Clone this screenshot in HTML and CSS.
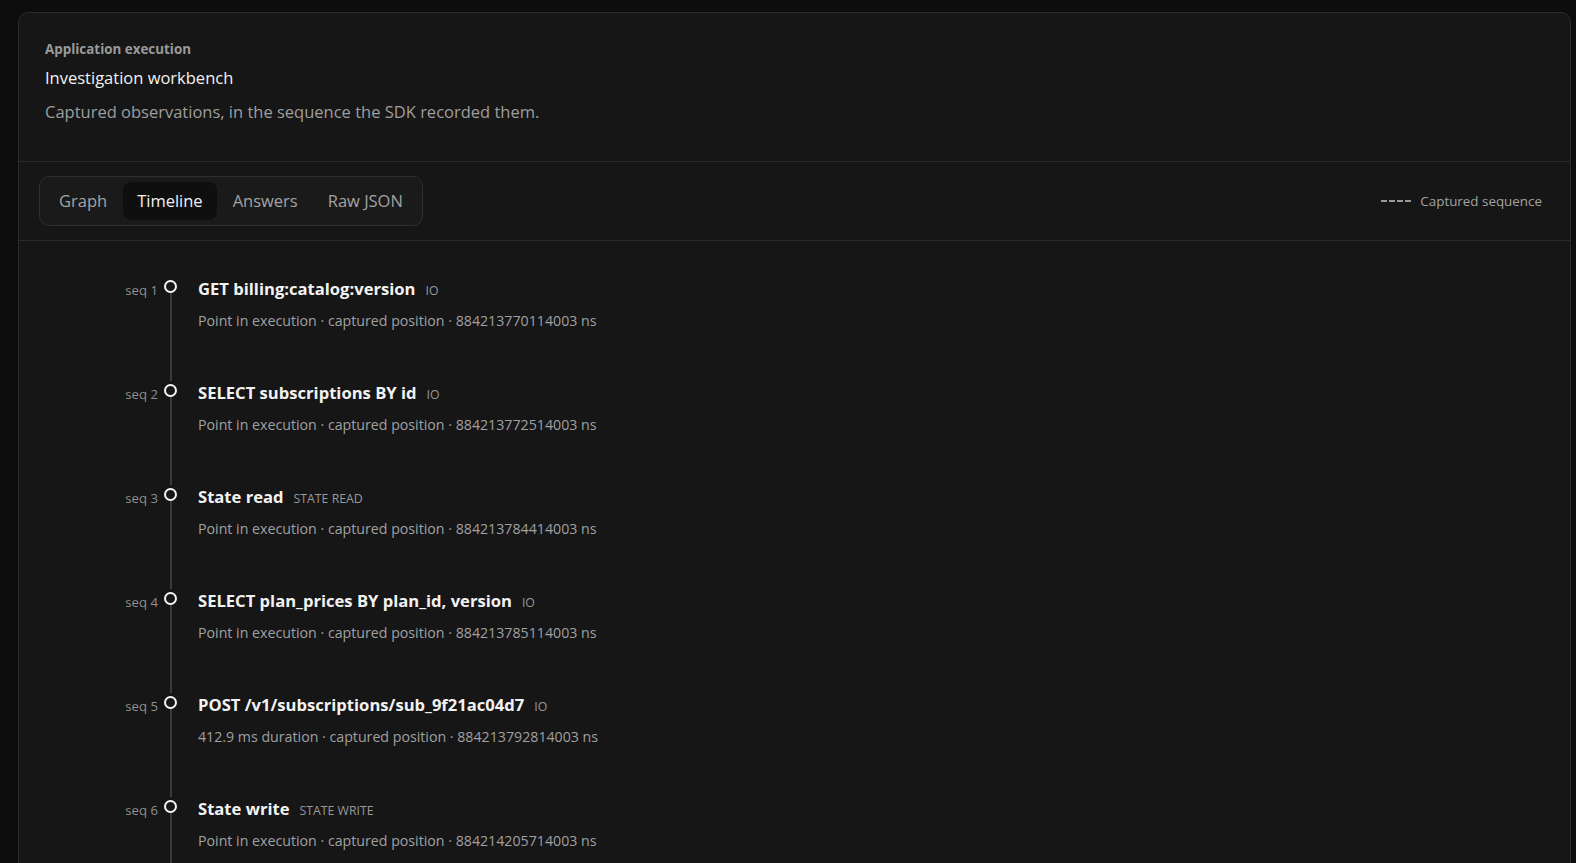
FILE: index.html
```html
<!DOCTYPE html>
<html lang="en">
<head>
<meta charset="utf-8">
<title>Investigation workbench</title>
<link rel="stylesheet" href="styles.css">
</head>
<body>
<main class="card">
  <header class="card-head">
    <div class="eyebrow">Application execution</div>
    <h1 class="title">Investigation workbench</h1>
    <p class="desc">Captured observations, in the sequence the SDK recorded them.</p>
  </header>

  <div class="toolbar">
    <nav class="tabs">
      <button class="tab">Graph</button>
      <button class="tab active">Timeline</button>
      <button class="tab">Answers</button>
      <button class="tab">Raw JSON</button>
    </nav>
    <div class="legend">
      <span class="dash"></span>
      <span class="legend-label">Captured sequence</span>
    </div>
  </div>

  <ol class="timeline">
    <li class="event">
      <span class="seq">seq 1</span>
      <span class="rail"><span class="dot"></span><span class="line"></span></span>
      <div class="body">
        <div class="ev-title"><span class="name">GET billing:catalog:version</span><span class="kind">IO</span></div>
        <div class="ev-meta">Point in execution · captured position · 884213770114003 ns</div>
      </div>
    </li>
    <li class="event">
      <span class="seq">seq 2</span>
      <span class="rail"><span class="dot"></span><span class="line"></span></span>
      <div class="body">
        <div class="ev-title"><span class="name">SELECT subscriptions BY id</span><span class="kind">IO</span></div>
        <div class="ev-meta">Point in execution · captured position · 884213772514003 ns</div>
      </div>
    </li>
    <li class="event">
      <span class="seq">seq 3</span>
      <span class="rail"><span class="dot"></span><span class="line"></span></span>
      <div class="body">
        <div class="ev-title"><span class="name">State read</span><span class="kind">State read</span></div>
        <div class="ev-meta">Point in execution · captured position · 884213784414003 ns</div>
      </div>
    </li>
    <li class="event">
      <span class="seq">seq 4</span>
      <span class="rail"><span class="dot"></span><span class="line"></span></span>
      <div class="body">
        <div class="ev-title"><span class="name">SELECT plan_prices BY plan_id, version</span><span class="kind">IO</span></div>
        <div class="ev-meta">Point in execution · captured position · 884213785114003 ns</div>
      </div>
    </li>
    <li class="event">
      <span class="seq">seq 5</span>
      <span class="rail"><span class="dot"></span><span class="line"></span></span>
      <div class="body">
        <div class="ev-title"><span class="name">POST /v1/subscriptions/sub_9f21ac04d7</span><span class="kind">IO</span></div>
        <div class="ev-meta">412.9 ms duration · captured position · 884213792814003 ns</div>
      </div>
    </li>
    <li class="event">
      <span class="seq">seq 6</span>
      <span class="rail"><span class="dot"></span><span class="line"></span></span>
      <div class="body">
        <div class="ev-title"><span class="name">State write</span><span class="kind">State write</span></div>
        <div class="ev-meta">Point in execution · captured position · 884214205714003 ns</div>
      </div>
    </li>
  </ol>
</main>
</body>
</html>
```

FILE: styles.css
```css
* { box-sizing: border-box; }

html, body {
  margin: 0;
  height: 100%;
  overflow: hidden;
}

body {
  background: #0d0d0d;
  font-family: "Segoe UI", "Open Sans", "Liberation Sans", sans-serif;
  color: #e8e8e8;
  padding: 12px 5px 0 18px;
}

.card {
  display: block;
  background: #161616;
  border: 1px solid #2b2b2b;
  border-radius: 10px;
  min-height: 900px;
}

.card-head {
  padding: 27px 26px 37px;
  border-bottom: 1px solid #2b2b2b;
}

.eyebrow {
  font-size: 13.4px;
  font-weight: 700;
  line-height: 18px;
  color: #9a9a9a;
}

.title {
  margin: 8px 0 0;
  font-size: 16.5px;
  font-weight: 400;
  line-height: 24px;
  color: #f2f2f2;
}

.desc {
  margin: 10px 0 0;
  font-size: 16.5px;
  line-height: 24px;
  color: #9e9e9e;
}

.toolbar {
  display: flex;
  align-items: center;
  justify-content: space-between;
  padding: 14px 28px 14px 20px;
  border-bottom: 1px solid #2b2b2b;
}

.tabs {
  display: flex;
  gap: 2px;
  padding: 5px;
  background: #1a1a1a;
  border: 1px solid #2f2f2f;
  border-radius: 10px;
}

.tab {
  font-family: inherit;
  font-size: 16.5px;
  line-height: 38px;
  height: 38px;
  padding: 0 14px;
  border: 0;
  border-radius: 8px;
  background: transparent;
  color: #a3a3a3;
}

.tab.active {
  background: #0f0f0f;
  color: #f2f2f2;
}

.legend {
  display: flex;
  align-items: center;
  gap: 9px;
}

.dash {
  width: 30px;
  height: 2px;
  background: repeating-linear-gradient(90deg, #9a9a9a 0 6px, transparent 6px 8px);
}

.legend-label {
  font-size: 13.4px;
  color: #a3a3a3;
}

.timeline {
  list-style: none;
  margin: 0;
  padding: 36px 0 0 78px;
}

.event {
  display: flex;
  align-items: stretch;
}

.seq {
  width: 61px;
  text-align: right;
  font-size: 13.2px;
  line-height: 24px;
  color: #8f8f8f;
  margin-top: 1px;
}

.rail {
  display: flex;
  flex-direction: column;
  align-items: center;
  width: 13px;
  margin: 0 21px 0 6px;
  padding-top: 3px;
}

.dot {
  width: 13px;
  height: 13px;
  border: 2px solid #f5f5f5;
  border-radius: 50%;
  background: #161616;
  flex: none;
}

.line {
  flex: 1;
  width: 2px;
  background: #3a3a3a;
}

.body {
  padding-bottom: 50px;
}

.ev-title {
  display: flex;
  align-items: baseline;
  gap: 10px;
  height: 24px;
  line-height: 24px;
}

.name {
  font-size: 16.6px;
  font-weight: 700;
  color: #f2f2f2;
}

.kind {
  font-size: 12.3px;
  text-transform: uppercase;
  color: #999999;
}

.ev-meta {
  margin-top: 10px;
  font-size: 14.2px;
  line-height: 20px;
  color: #a0a0a0;
}
```
